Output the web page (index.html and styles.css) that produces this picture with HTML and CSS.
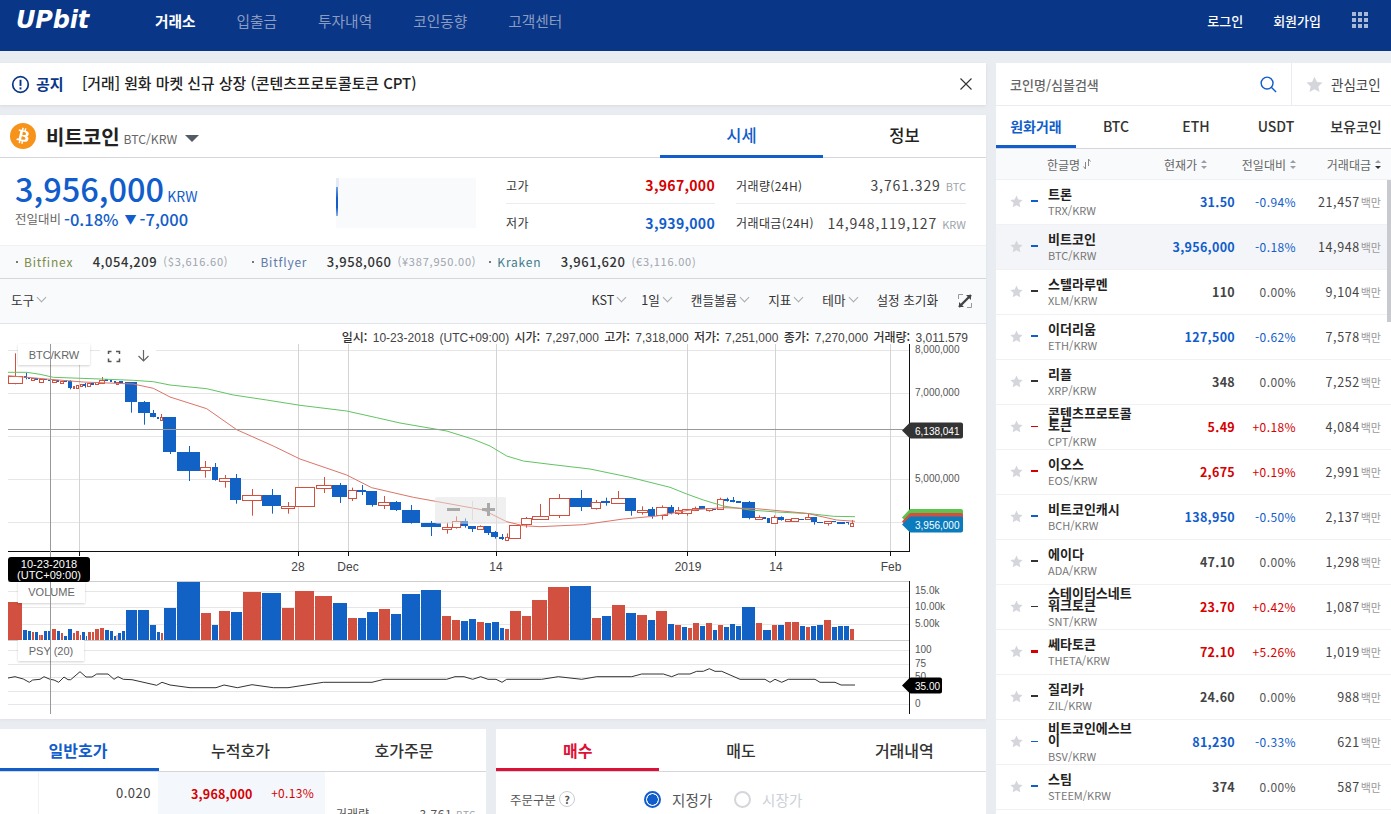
FILE: index.html
```html
<!DOCTYPE html>
<html lang="ko">
<head>
    <title>업비트 거래소</title>
    <link rel="stylesheet" href="styles.css">
</head>
<body>
    <header class="topbar">
        <div class="logo">UPbit</div>
        <nav class="nav">
            <a class="nav-item active">거래소</a>
            <a class="nav-item">입출금</a>
            <a class="nav-item">투자내역</a>
            <a class="nav-item">코인동향</a>
            <a class="nav-item">고객센터</a>
        </nav>
        <div class="user-menu">
            <a>로그인</a>
            <a>회원가입</a>
            <div class="apps">
                <i></i><i></i><i></i><i></i><i></i><i></i><i></i><i></i><i></i>
            </div>
        </div>
    </header>

    <div class="page">
        <main class="left-col">
            <section class="notice">
                <svg class="notice-icon" viewBox="0 0 20 20"><circle cx="10" cy="10" r="8.2" fill="none" stroke="#093687" stroke-width="1.8"/><rect x="9" y="5" width="2" height="6.5" fill="#093687"/><rect x="9" y="13" width="2" height="2.2" fill="#093687"/></svg>
                <span class="notice-label">공지</span>
                <span class="notice-text">[거래] 원화 마켓 신규 상장 (콘텐츠프로토콜토큰 CPT)</span>
                <svg class="notice-close" viewBox="0 0 12 12"><path d="M.5.5l11 11M11.5.5l-11 11" fill="none" stroke="#333" stroke-width="1.1"/></svg>
            </section>

            <section class="market-panel">
                <div class="market-head">
                    <div class="coin-title">
                        <svg class="btc-logo" viewBox="0 0 24 24"><circle cx="12" cy="12" r="12" fill="#f7931a"/><path fill="#fff" d="M17.288 10.291c.24-1.59-.974-2.45-2.64-3.03l.54-2.153-1.315-.33-.525 2.107c-.345-.087-.705-.167-1.064-.25l.526-2.127-1.32-.33-.54 2.165c-.285-.067-.565-.132-.84-.2l-1.815-.45-.35 1.407s.975.225.955.236c.535.136.63.486.615.766l-1.477 5.92c-.075.166-.24.406-.614.314.015.02-.96-.24-.96-.24l-.66 1.51 1.71.426.93.242-.54 2.19 1.32.327.54-2.17c.36.1.705.19 1.05.273l-.51 2.154 1.32.33.545-2.19c2.24.427 3.93.257 4.64-1.774.57-1.637-.03-2.58-1.217-3.196.854-.193 1.5-.76 1.68-1.93h.01zm-3.01 4.22c-.404 1.64-3.157.75-4.05.53l.72-2.9c.896.23 3.757.67 3.33 2.37zm.41-4.24c-.37 1.49-2.662.735-3.405.55l.654-2.64c.744.18 3.137.524 2.75 2.084v.006z"/></svg>
                        <span class="coin-title-name">비트코인</span>
                        <span class="coin-title-pair">BTC/KRW</span>
                        <span class="caret"></span>
                    </div>
                    <div class="market-tabs">
                        <a class="market-tab active">시세</a>
                        <a class="market-tab">정보</a>
                    </div>
                </div>

                <div class="summary">
                    <div class="price-box">
                        <div class="price-main"><strong>3,956,000</strong><span>KRW</span></div>
                        <div class="price-diff"><span class="diff-label">전일대비</span><b>-0.18%</b><i class="arrow">▼</i><b>-7,000</b></div>
                    </div>
                    <div class="spark"><i></i></div>
                    <div class="stats">
                        <div class="stat"><span>고가</span><b class="up">3,967,000</b></div>
                        <div class="stat"><span>거래량(24H)</span><em>3,761.329<small>BTC</small></em></div>
                        <div class="stat"><span>저가</span><b class="down">3,939,000</b></div>
                        <div class="stat"><span>거래대금(24H)</span><em>14,948,119,127<small>KRW</small></em></div>
                    </div>
                </div>

                <div class="exchanges">
                    <span class="ex-name bitfinex">Bitfinex</span><b>4,054,209</b><span class="ex-fiat">($3,616.60)</span>
                    <span class="ex-name bitflyer">Bitflyer</span><b>3,958,060</b><span class="ex-fiat">(¥387,950.00)</span>
                    <span class="ex-name kraken">Kraken</span><b>3,961,620</b><span class="ex-fiat">(€3,116.00)</span>
                </div>

                <div class="toolbar">
                    <a class="tool first">도구<i class="chev"></i></a>
                    <a class="tool kst">KST<i class="chev"></i></a>
                    <a class="tool">1일<i class="chev"></i></a>
                    <a class="tool">캔들볼륨<i class="chev"></i></a>
                    <a class="tool">지표<i class="chev"></i></a>
                    <a class="tool">테마<i class="chev"></i></a>
                    <a class="tool">설정 초기화</a>
                    <svg class="expand" viewBox="0 0 14 14"><path d="M.5 5V.5H5M9 13.5h4.500V9" fill="none" stroke="#999"/><path d="M1 13l12-12" stroke="#444" stroke-width="2.400"/><path d="M8 1h5v5zM1 8v5h5z" fill="#444"/></svg>
                </div>

                <div class="chart-area">
                    <div class="ohlc">
                        <b>일시:</b> 10-23-2018 (UTC+09:00) <b>시가:</b> 7,297,000 <b>고가:</b> 7,318,000 <b>저가:</b> 7,251,000 <b>종가:</b> 7,270,000 <b>거래량:</b> 3,011.579
                    </div>
                    <svg id="chart" class="chart" width="986" height="395" viewBox="0 0 986 395"></svg>
                </div>
            </section>

            <div class="bottom-row">
                <section class="orderbook">
                    <div class="tabs book-tabs">
                        <a class="tab active-blue">일반호가</a>
                        <a class="tab">누적호가</a>
                        <a class="tab">호가주문</a>
                    </div>
                    <div class="book-row">
                        <div class="book-left"><span>0.020</span></div>
                        <div class="book-mid"><b>3,968,000</b><span>+0.13%</span></div>
                        <div class="book-right"><span>거래량</span><em>3,761<small>BTC</small></em></div>
                    </div>
                </section>
                <section class="order-form">
                    <div class="tabs">
                        <a class="tab active-red">매수</a>
                        <a class="tab">매도</a>
                        <a class="tab">거래내역</a>
                    </div>
                    <div class="order-type">
                        <div class="order-label">주문구분<i class="help">?</i></div>
                        <label class="radio on"><i></i>지정가</label>
                        <label class="radio off"><i></i>시장가</label>
                    </div>
                </section>
            </div>
        </main>

        <aside class="coin-panel">
            <div class="search-row">
                <div class="search">
                    <span>코인명/심볼검색</span>
                    <svg viewBox="0 0 18 18"><circle cx="7.500" cy="7.500" r="6.300" fill="none" stroke="#115dcb" stroke-width="1.500"/><path d="M12 12l5 5" stroke="#115dcb" stroke-width="1.500"/></svg>
                </div>
                <div class="fav">
                    <svg class="star big" viewBox="0 0 24 24"><path d="M12 1l3.400 7.400 8 .9-6 5.400 1.700 8L12 18.700 4.900 22.700l1.700-8-6-5.400 8-.9z"/></svg>
                    <span>관심코인</span>
                </div>
            </div>
            <div class="coin-tabs">
                <a class="coin-tab active">원화거래</a>
                <a class="coin-tab">BTC</a>
                <a class="coin-tab">ETH</a>
                <a class="coin-tab">USDT</a>
                <a class="coin-tab">보유코인</a>
            </div>
            <div class="coin-head">
                <span class="h-name">한글명<svg class="swap" viewBox="0 0 8 10"><path d="M5.500 0v7M5.500 0l2 2.500M2.500 10V3M2.500 10l-2-2.500" fill="none" stroke="#888"/></svg></span>
                <span class="h-price">현재가<i class="sort"></i></span>
                <span class="h-change">전일대비<i class="sort"></i></span>
                <span class="h-vol">거래대금<i class="sort active"></i></span>
            </div>
            <div class="coin-list">
                <div class="coin-row"><svg class="star" viewBox="0 0 24 24"><path d="M12 1l3.400 7.400 8 .9-6 5.400 1.700 8L12 18.700 4.900 22.700l1.700-8-6-5.400 8-.9z"/></svg><i class="tick down"></i><div class="coin-name"><b>트론</b><span>TRX/KRW</span></div><b class="c-price down">31.50</b><span class="c-change down">-0.94%</span><span class="c-vol">21,457<small>백만</small></span></div>
                <div class="coin-row selected"><svg class="star" viewBox="0 0 24 24"><path d="M12 1l3.400 7.400 8 .9-6 5.400 1.700 8L12 18.700 4.900 22.700l1.700-8-6-5.400 8-.9z"/></svg><i class="tick down"></i><div class="coin-name"><b>비트코인</b><span>BTC/KRW</span></div><b class="c-price down">3,956,000</b><span class="c-change down">-0.18%</span><span class="c-vol">14,948<small>백만</small></span></div>
                <div class="coin-row"><svg class="star" viewBox="0 0 24 24"><path d="M12 1l3.400 7.400 8 .9-6 5.400 1.700 8L12 18.700 4.900 22.700l1.700-8-6-5.400 8-.9z"/></svg><i class="tick"></i><div class="coin-name"><b>스텔라루멘</b><span>XLM/KRW</span></div><b class="c-price">110</b><span class="c-change">0.00%</span><span class="c-vol">9,104<small>백만</small></span></div>
                <div class="coin-row"><svg class="star" viewBox="0 0 24 24"><path d="M12 1l3.400 7.400 8 .9-6 5.400 1.700 8L12 18.700 4.900 22.700l1.700-8-6-5.400 8-.9z"/></svg><i class="tick down"></i><div class="coin-name"><b>이더리움</b><span>ETH/KRW</span></div><b class="c-price down">127,500</b><span class="c-change down">-0.62%</span><span class="c-vol">7,578<small>백만</small></span></div>
                <div class="coin-row"><svg class="star" viewBox="0 0 24 24"><path d="M12 1l3.400 7.400 8 .9-6 5.400 1.700 8L12 18.700 4.900 22.700l1.700-8-6-5.400 8-.9z"/></svg><i class="tick"></i><div class="coin-name"><b>리플</b><span>XRP/KRW</span></div><b class="c-price">348</b><span class="c-change">0.00%</span><span class="c-vol">7,252<small>백만</small></span></div>
                <div class="coin-row"><svg class="star" viewBox="0 0 24 24"><path d="M12 1l3.400 7.400 8 .9-6 5.400 1.700 8L12 18.700 4.900 22.700l1.700-8-6-5.400 8-.9z"/></svg><i class="tick up"></i><div class="coin-name"><b>콘텐츠프로토콜토큰</b><span>CPT/KRW</span></div><b class="c-price up">5.49</b><span class="c-change up">+0.18%</span><span class="c-vol">4,084<small>백만</small></span></div>
                <div class="coin-row"><svg class="star" viewBox="0 0 24 24"><path d="M12 1l3.400 7.400 8 .9-6 5.400 1.700 8L12 18.700 4.900 22.700l1.700-8-6-5.400 8-.9z"/></svg><i class="tick up"></i><div class="coin-name"><b>이오스</b><span>EOS/KRW</span></div><b class="c-price up">2,675</b><span class="c-change up">+0.19%</span><span class="c-vol">2,991<small>백만</small></span></div>
                <div class="coin-row"><svg class="star" viewBox="0 0 24 24"><path d="M12 1l3.400 7.400 8 .9-6 5.400 1.700 8L12 18.700 4.900 22.700l1.700-8-6-5.400 8-.9z"/></svg><i class="tick down"></i><div class="coin-name"><b>비트코인캐시</b><span>BCH/KRW</span></div><b class="c-price down">138,950</b><span class="c-change down">-0.50%</span><span class="c-vol">2,137<small>백만</small></span></div>
                <div class="coin-row"><svg class="star" viewBox="0 0 24 24"><path d="M12 1l3.400 7.400 8 .9-6 5.400 1.700 8L12 18.700 4.900 22.700l1.700-8-6-5.400 8-.9z"/></svg><i class="tick"></i><div class="coin-name"><b>에이다</b><span>ADA/KRW</span></div><b class="c-price">47.10</b><span class="c-change">0.00%</span><span class="c-vol">1,298<small>백만</small></span></div>
                <div class="coin-row"><svg class="star" viewBox="0 0 24 24"><path d="M12 1l3.400 7.400 8 .9-6 5.400 1.700 8L12 18.700 4.900 22.700l1.700-8-6-5.400 8-.9z"/></svg><i class="tick"></i><div class="coin-name"><b>스테이터스네트워크토큰</b><span>SNT/KRW</span></div><b class="c-price up">23.70</b><span class="c-change up">+0.42%</span><span class="c-vol">1,087<small>백만</small></span></div>
                <div class="coin-row"><svg class="star" viewBox="0 0 24 24"><path d="M12 1l3.400 7.400 8 .9-6 5.400 1.700 8L12 18.700 4.900 22.700l1.700-8-6-5.400 8-.9z"/></svg><i class="tick up thick"></i><div class="coin-name"><b>쎄타토큰</b><span>THETA/KRW</span></div><b class="c-price up">72.10</b><span class="c-change up">+5.26%</span><span class="c-vol">1,019<small>백만</small></span></div>
                <div class="coin-row"><svg class="star" viewBox="0 0 24 24"><path d="M12 1l3.400 7.400 8 .9-6 5.400 1.700 8L12 18.700 4.900 22.700l1.700-8-6-5.400 8-.9z"/></svg><i class="tick"></i><div class="coin-name"><b>질리카</b><span>ZIL/KRW</span></div><b class="c-price">24.60</b><span class="c-change">0.00%</span><span class="c-vol">988<small>백만</small></span></div>
                <div class="coin-row"><svg class="star" viewBox="0 0 24 24"><path d="M12 1l3.400 7.400 8 .9-6 5.400 1.700 8L12 18.700 4.900 22.700l1.700-8-6-5.400 8-.9z"/></svg><i class="tick down"></i><div class="coin-name"><b>비트코인에스브이</b><span>BSV/KRW</span></div><b class="c-price down">81,230</b><span class="c-change down">-0.33%</span><span class="c-vol">621<small>백만</small></span></div>
                <div class="coin-row"><svg class="star" viewBox="0 0 24 24"><path d="M12 1l3.400 7.400 8 .9-6 5.400 1.700 8L12 18.700 4.900 22.700l1.700-8-6-5.400 8-.9z"/></svg><i class="tick down"></i><div class="coin-name"><b>스팀</b><span>STEEM/KRW</span></div><b class="c-price">374</b><span class="c-change">0.00%</span><span class="c-vol">587<small>백만</small></span></div>
            </div>
            <div class="scroll-thumb"></div>
        </aside>
    </div>

    <script src="chart.js"></script>
</body>
</html>
```

FILE: styles.css
```css
* {
    box-sizing: border-box;
}

html, body {
    height: 814px;
    overflow: hidden;
}

body {
    margin: 0;
    background: #e9ecf1;
    color: #333;
    font-family: "Noto Sans CJK KR", "Noto Sans", sans-serif;
    font-size: 12px;
}

a {
    text-decoration: none;
    color: inherit;
}

.up {
    color: #d60000;
}

.down {
    color: #115dcb;
}

/* top bar */
.topbar {
    display: flex;
    align-items: center;
    height: 51px;
    padding: 0 23px 11px 16px;
    background: #093687;
    color: #fff;
}

.logo {
    width: 139px;
    font-family: "DejaVu Sans", sans-serif;
    font-size: 24px;
    font-weight: bold;
    font-style: italic;
    letter-spacing: -0.2px;
}

.nav {
    display: flex;
    gap: 41px;
}

.nav-item {
    font-size: 14.700px;
    color: #8a9cc0;
}

.nav-item.active {
    color: #fff;
    font-weight: bold;
}

.user-menu {
    display: flex;
    align-items: center;
    gap: 30px;
    margin-left: auto;
    font-size: 13px;
    font-weight: 500;
}

.apps {
    display: grid;
    grid-template-columns: repeat(3, 4px);
    grid-auto-rows: 4px;
    gap: 2px;
    margin-left: 1px;
}

.apps i {
    background: #a9b8d5;
}

/* layout */
.page {
    display: flex;
    gap: 10px;
    padding-top: 12px;
}

.left-col {
    display: flex;
    flex-direction: column;
    gap: 10px;
    width: 986px;
}

/* notice */
.notice {
    display: flex;
    align-items: center;
    height: 42px;
    padding: 0 14px 0 11px;
    background: #fff;
    box-shadow: 0 1px 3px rgba(0, 0, 0, 0.08);
}

.notice-icon {
    width: 19px;
    height: 19px;
}

.notice-label {
    width: 46px;
    margin: 0 0 1px 6px;
    color: #093687;
    font-size: 15px;
    font-weight: bold;
}

.notice-text {
    margin-bottom: 3px;
    font-size: 14.900px;
    font-weight: 500;
    color: #222;
}

.notice-close {
    width: 12px;
    height: 12px;
    margin-left: auto;
}

/* market panel */
.market-panel {
    height: 604px;
    background: #fff;
    box-shadow: 0 1px 3px rgba(0, 0, 0, 0.05);
}

.market-head {
    display: flex;
    justify-content: space-between;
    height: 43px;
    border-bottom: 1px solid #d5d6dc;
}

.coin-title {
    display: flex;
    align-items: center;
    padding-left: 10px;
}

.btc-logo {
    width: 26px;
    height: 26px;
}

.coin-title-name {
    margin-left: 10px;
    font-size: 20px;
    font-weight: bold;
    color: #222;
}

.coin-title-pair {
    margin: 5px 0 0 4px;
    font-size: 12.200px;
    color: #666;
}

.caret {
    width: 0;
    height: 0;
    margin: 5px 0 0 8px;
    border-left: 7px solid transparent;
    border-right: 7px solid transparent;
    border-top: 7px solid #555b66;
}

.market-tabs {
    display: flex;
}

.market-tab {
    width: 163px;
    height: 43px;
    padding-top: 8px;
    text-align: center;
    font-size: 16.500px;
    font-weight: 500;
    color: #222;
}

.market-tab.active {
    color: #115dcb;
    border-bottom: 3px solid #115dcb;
}

.summary {
    display: flex;
    height: 87px;
}

.price-box {
    width: 336px;
    padding: 15px 0 0 15px;
}

.price-main {
    display: flex;
    align-items: baseline;
    height: 30px;
    line-height: 30px;
    color: #115dcb;
}

.price-main strong {
    font-size: 32.500px;
    font-weight: 500;
}

.price-main span {
    margin-left: 3px;
    font-size: 14px;
}

.price-diff {
    display: flex;
    align-items: center;
    height: 24px;
    margin-top: 4px;
    color: #115dcb;
    font-size: 16.500px;
    line-height: 24px;
}

.price-diff b {
    font-weight: 500;
}

.diff-label {
    margin-right: 3px;
    font-size: 12.500px;
    color: #666;
}

.arrow {
    margin: 0 3px 0 6px;
    font-size: 12px;
    font-style: normal;
}

.spark {
    width: 140px;
    height: 50px;
    margin-top: 20px;
    background: linear-gradient(#e4ebf6, #e4ebf6) no-repeat 0 0 / 3px 9px, #f9fafc;
}

.spark i {
    display: block;
    width: 2px;
    height: 29px;
    margin: 9px 0 0 0;
    background: linear-gradient(#6f9fe0, #115dcb 40%, #115dcb 70%, #8fb4e8);
}

.stats {
    display: grid;
    grid-template-columns: 209px 230px;
    grid-auto-rows: 37px;
    column-gap: 21px;
    margin: 9px 0 0 30px;
}

.stat {
    display: flex;
    justify-content: space-between;
    align-items: center;
    height: 37px;
    font-size: 12px;
}

.stat span {
    letter-spacing: 0.4px;
}

.stat:nth-child(-n+2) {
    border-bottom: 1px solid #e9ecf1;
}

.stat b {
    font-size: 14px;
    font-weight: bold;
    letter-spacing: 0.3px;
}

.stat em {
    font-style: normal;
    font-size: 14px;
    color: #444;
    letter-spacing: 0.9px;
}

.stat small {
    margin-left: 5px;
    font-size: 11px;
    color: #a0a4ac;
    letter-spacing: 0;
}

.exchanges {
    display: flex;
    align-items: center;
    height: 34px;
    padding: 0 0 2px 24px;
    background: #f9fafc;
    border-top: 1px solid #f1f1f4;
    border-bottom: 1px solid #d5d6dc;
    font-size: 12px;
    white-space: nowrap;
}

.exchanges b {
    font-size: 13px;
    font-weight: 500;
    letter-spacing: 0.55px;
    margin-left: 19.500px;
}

.ex-name {
    position: relative;
    letter-spacing: 0.8px;
}

.ex-name::before {
    content: "";
    position: absolute;
    left: -8px;
    top: 8px;
    width: 2px;
    height: 2px;
    background: #777;
}

.bitfinex {
    color: #7a8b4a;
}

.bitflyer {
    margin-left: 32px;
    color: #5f79a8;
}

.kraken {
    margin-left: 21px;
    color: #3f7b8a;
}

.ex-fiat {
    margin-left: 6px;
    color: #a0a4ac;
    font-size: 11px;
    letter-spacing: 0.8px;
}

.toolbar {
    display: flex;
    align-items: center;
    justify-content: flex-end;
    gap: 18px;
    height: 45px;
    padding: 0 14px 4px 11px;
    background: #f9fafc;
    border-bottom: 1px solid #e3e4e8;
    font-size: 12.600px;
    color: #333;
}

.tool {
    display: flex;
    align-items: center;
}

.tool.first {
    margin-right: auto;
}

.tool.kst {
    margin-right: -4px;
}

.chev {
    width: 7px;
    height: 7px;
    margin: -4px 2px 0 4px;
    border-right: 1px solid #aaa;
    border-bottom: 1px solid #aaa;
    transform: rotate(45deg);
}

.expand {
    width: 14px;
    height: 14px;
    margin: 3px 0 0 2px;
}

.chart-area {
    position: relative;
    height: 395px;
}

.ohlc {
    position: absolute;
    top: 4px;
    right: 18px;
    z-index: 1;
    font-family: "Liberation Sans", "Noto Sans CJK KR", sans-serif;
    font-size: 12px;
    color: #444;
    white-space: nowrap;
    word-spacing: 2px;
}

.ohlc b {
    font-family: "Noto Sans CJK KR", sans-serif;
    font-weight: 500;
    color: #333;
}

.chart {
    display: block;
}

.chart text {
    font-family: "Liberation Sans", sans-serif;
    font-size: 10px;
    fill: #555;
}

.chart text.x-label {
    font-size: 12px;
    fill: #444;
    text-anchor: middle;
}

.chart text.tag {
    fill: #fff;
}

.chart text.time-tag {
    fill: #fff;
    font-size: 11px;
    text-anchor: middle;
}

.chart text.pane-title {
    font-size: 11px;
    fill: #666;
    text-anchor: middle;
}

.pane-box {
    fill: #fff;
    filter: drop-shadow(0 1px 1px rgba(0, 0, 0, 0.18));
}

/* bottom panels */
.bottom-row {
    display: flex;
    gap: 10px;
}

.orderbook, .order-form {
    height: 120px;
    background: #fff;
}

.orderbook {
    width: 486px;
}

.order-form {
    width: 490px;
}

.tabs {
    display: grid;
    grid-template-columns: 1fr 1fr 1fr;
    height: 43px;
    border-bottom: 1px solid #d5d6dc;
}

.book-tabs {
    grid-template-columns: 159px 166px 161px;
}

.book-tabs .tab {
    padding-right: 3px;
}

.tab {
    padding-top: 9px;
    text-align: center;
    font-size: 16px;
    font-weight: 500;
    color: #333;
}

.active-blue {
    color: #115dcb;
    font-weight: bold;
    border-bottom: 3px solid #115dcb;
}

.active-red {
    color: #dd1138;
    font-weight: bold;
    border-bottom: 3px solid #dd1138;
}

.book-row {
    display: flex;
    height: 77px;
}

.book-left {
    width: 158px;
    padding: 11px 7px 0 0;
    text-align: right;
    background: linear-gradient(to right, #fff 38px, #f1f1f4 38px, #f1f1f4 39px, #fff 39px);
    font-size: 13px;
    letter-spacing: 0.5px;
    color: #444;
}

.book-mid {
    display: flex;
    justify-content: space-between;
    width: 167px;
    padding: 12px 11px 0 33px;
    background: #f4f8fd;
    color: #d60000;
}

.book-mid b {
    font-size: 12.500px;
    letter-spacing: 0.2px;
}

.book-mid span {
    font-size: 12px;
    letter-spacing: 0.3px;
}

.book-right {
    display: flex;
    justify-content: space-between;
    flex: 1;
    padding: 33px 10px 0 11px;
    color: #555;
}

.book-right em {
    font-style: normal;
    letter-spacing: 0.5px;
}

.book-right small {
    margin-left: 4px;
    font-size: 10px;
    color: #a0a4ac;
}

.order-type {
    display: flex;
    align-items: center;
    height: 58px;
    padding: 0 0 4px 14px;
}

.order-label {
    display: flex;
    align-items: center;
    width: 134px;
    font-size: 12.500px;
    color: #555;
}

.help {
    width: 16px;
    height: 16px;
    margin-left: 3px;
    border: 1px solid #c9ccd2;
    border-radius: 50%;
    text-align: center;
    line-height: 14px;
    font-size: 11px;
    font-style: normal;
    font-weight: bold;
    color: #555;
}

.radio {
    display: flex;
    align-items: center;
    width: 90px;
    font-size: 14.500px;
    letter-spacing: 0.2px;
    color: #555;
}

.radio i {
    width: 17px;
    height: 17px;
    margin-right: 11px;
    border-radius: 50%;
}

.radio.on i {
    border: 2.500px solid #115dcb;
    background: radial-gradient(circle, #115dcb 5px, #fff 5.500px);
}

.radio.off {
    color: #ccd0d8;
}

.radio.off i {
    border: 2.500px solid #d5d6dc;
}

/* coin panel */
.coin-panel {
    position: relative;
    width: 395px;
    height: 751px;
    background: #fff;
}

.search-row {
    display: flex;
    height: 43px;
    border-bottom: 1px solid #e9ecf1;
}

.search {
    display: flex;
    align-items: center;
    justify-content: space-between;
    width: 296px;
    padding: 0 14px;
    border-right: 1px solid #e9ecf1;
    font-size: 13px;
    font-weight: 500;
    color: #666;
}

.search svg {
    width: 17px;
    height: 17px;
}

.fav {
    display: flex;
    align-items: center;
    gap: 8px;
    padding-left: 14px;
    font-size: 13.500px;
    color: #444;
}

.star {
    width: 13px;
    height: 13px;
    fill: #d5d6dc;
    flex: none;
}

.star.big {
    width: 17px;
    height: 17px;
}

.coin-tabs {
    display: grid;
    grid-template-columns: repeat(5, 80px);
    height: 43px;
    border-bottom: 1px solid #d5d6dc;
}

.coin-tab {
    padding-top: 10px;
    text-align: center;
    font-size: 14px;
    font-weight: 500;
    color: #333;
}

.coin-tab.active {
    color: #115dcb;
    font-weight: bold;
    border-bottom: 3px solid #115dcb;
}

.coin-head {
    display: grid;
    grid-template-columns: 110px 50px 89px 85px;
    align-items: center;
    height: 31px;
    padding-left: 51px;
    background: #f9fafc;
    border-bottom: 1px solid #f1f1f4;
    font-size: 12px;
    color: #666;
}

.h-name {
    display: flex;
    align-items: center;
}

.h-price, .h-change, .h-vol {
    display: flex;
    align-items: center;
    justify-content: flex-end;
    white-space: nowrap;
}

.swap {
    width: 8px;
    height: 10px;
    margin-left: 3px;
}

.sort {
    position: relative;
    width: 6px;
    height: 9px;
    margin-left: 4px;
}

.sort::before, .sort::after {
    content: "";
    position: absolute;
    left: 0;
    border-left: 3px solid transparent;
    border-right: 3px solid transparent;
}

.sort::before {
    top: 0;
    border-bottom: 3px solid #9a9ea6;
}

.sort::after {
    bottom: 0;
    border-top: 3px solid #9a9ea6;
}

.sort.active::after {
    border-top-color: #333;
}

.coin-row {
    display: grid;
    grid-template-columns: 13px 11px 1fr 100px 61px 85px;
    align-items: center;
    height: 45px;
    padding: 0 10px 2px 14px;
    border-bottom: 1px solid #f1f1f4;
}

.coin-row.selected {
    background: #f4f5f8;
}

.tick {
    width: 7px;
    height: 1.500px;
    margin-left: 8px;
    background: #333;
}

.tick.up {
    background: #d60000;
}

.tick.down {
    background: #115dcb;
}

.tick.thick {
    height: 3px;
}

.coin-name {
    grid-column: 3;
    width: 86px;
    margin: 2px 0 0 14px;
}

.coin-name b {
    display: block;
    font-size: 13px;
    line-height: 12px;
    color: #222;
    word-break: break-all;
}

.coin-name span {
    display: block;
    margin-top: 3px;
    font-size: 11px;
    line-height: 14px;
    color: #777;
    white-space: nowrap;
}

.c-price {
    text-align: right;
    font-size: 12.500px;
    letter-spacing: 0.3px;
    color: #444;
}

.c-price.up {
    color: #d60000;
}

.c-price.down {
    color: #115dcb;
}

.c-change {
    text-align: right;
    font-size: 12px;
    letter-spacing: 0.4px;
    color: #555;
}

.c-change.up {
    color: #d60000;
}

.c-change.down {
    color: #115dcb;
}

.c-vol {
    text-align: right;
    font-size: 12.500px;
    letter-spacing: 0.6px;
    color: #444;
    white-space: nowrap;
}

.c-vol small {
    margin-left: 1px;
    font-size: 11px;
    color: #999;
    letter-spacing: 0;
}

.scroll-thumb {
    position: absolute;
    top: 117px;
    right: 0;
    width: 4px;
    height: 142px;
    background: #c8cad0;
}
```

FILE: chart.js
```js
// coordinates below were read at 3x scale, page origin x=0, y=320 (main) / y=550 (lower panes)
var NS = 'http://www.w3.org/2000/svg';
var svg = document.getElementById('chart');
var TOP = 324;
var RED = '#d1503f', BLUE = '#1261c4';

function add(tag, attrs, text) {
    var el = document.createElementNS(NS, tag);
    for (var k in attrs) el.setAttribute(k, attrs[k]);
    if (text) el.textContent = text;
    svg.appendChild(el);
    return el;
}

function line(x1, y1, x2, y2, color, w) {
    add('line', { x1: x1, y1: y1 - TOP, x2: x2, y2: y2 - TOP, stroke: color, 'stroke-width': w || 1 });
}

function my(y) { return y / 3 + 320; }
function ly(y) { return y / 3 + 550; }

// grid
[350.5, 393.5, 436.5, 479.5, 522.5].forEach(function (y) { line(8, y, 909, y, '#e6e6e6'); });
[591.5, 607.5, 624.5, 650.5, 664.5, 677.5, 691.5, 704.5].forEach(function (y) { line(8, y, 909, y, '#e6e6e6'); });
[79.5, 298.5, 348.5, 496.5, 687.5, 775.5, 890.5].forEach(function (x) { line(x, 344, x, 551, '#d4d4d4'); });

// candles: up?, x1, x2, top, bottom, wick top, wick bottom
var candles = [
    [1,24,68,167,190,100,193],[0,72,84,167,175,158,178],[0,85,92,172,177],[1,93,104,174,181],[0,105,116,175,180],
    [1,117,131,176,185],[0,132,143,178,181],[0,144,155,179,184],[1,156,170,180,187],[0,171,179,181,185],
    [1,180,192,183,190],[0,193,203,181,185],[0,204,218,183,204,181,208],[1,218,226,197,205],[1,228,236,196,203],
    [1,240,248,193,199],[0,249,260,191,198,189,203],[1,262,272,190,199],[0,273,285,190,194],[1,286,298,186,192],
    [1,298,314,179,189,171,190],[0,315,328,177,183],[0,329,340,180,187],[0,341,350,183,190],[1,349,356,186,193],
    [0,358,372,184,190],[0,375,414,186,245,186,278],[0,414,453,246,278,243,314],[0,450,471,279,291,270,292],
    [0,471,481,290,298],[1,481,490,292,299,282,299],[0,490,531,291,395,291,402],[0,531,603,397,452,378,483],
    [1,601,634,442,451,423,473],[0,636,657,441,479,429,482],[1,658,694,475,482,465,503],[0,691,726,474,540,462,551],
    [1,727,785,526,541,507,587],[0,786,846,525,557,507,581],[1,844,885,557,563,546,581],[1,886,946,502,557,502,557],
    [1,947,997,496,503,471,519],[0,997,1044,495,531,489,549],[1,1043,1070,511,533,503,543],[0,1071,1101,511,515,495,525],
    [0,1098,1134,513,555,513,560],[1,1135,1170,547,554,528,567],[0,1171,1206,546,570,543,573],[0,1206,1263,570,608,555,611],
    [0,1263,1325,608,621,603,648],[1,1325,1355,622,628,608,641],[1,1357,1382,604,620,589,626],[0,1382,1407,604,618,595,623],
    [0,1405,1431,618,627,618,636],[1,1431,1453,619,628,616,630],[0,1453,1476,618,639,618,645],[0,1473,1497,637,651,633,656]
];
// right half of the chart, read from the second crop (x + 1470)
[
    [0,27,45,650,656,642,660],[1,45,58,650,659,640,659],[1,58,94,616,653],[1,94,126,595,613,591,623],[1,126,176,589,596,552,596],
    [1,176,239,535,586,522,594],[0,239,308,535,560,510,573],[1,304,332,547,563,540,569],[0,333,363,543,548,533,557],
    [1,364,407,535,548,513,548],[0,405,441,534,572,534,587],[1,442,473,569,575,559,584],[0,473,498,568,587,561,596],
    [1,498,533,562,586,556,599],[0,533,556,561,579,555,583],[1,556,575,570,579,561,585],[1,575,607,568,578,568,587],
    [1,607,627,563,570,560,573],[0,627,647,559,567],[1,647,668,565,571,565,575],[0,668,682,566,569],[1,682,701,538,566,533,568],
    [0,701,719,537,543,533,545],[0,719,737,540,545,531,547],[0,737,756,542,548],[0,756,798,547,594,543,598],
    [1,796,819,592,598,586,598],[0,819,831,590,596],[0,831,844,595,610],[1,844,863,592,608,586,610],[0,863,884,591,599,589,602],
    [1,884,904,597,604],[1,904,926,595,602],[0,926,945,596,600],[1,945,963,592,598,582,598],[0,963,984,591,606,591,614],
    [0,981,1002,605,610],[1,1002,1025,604,610,604,617],[0,1025,1041,603,607],[0,1041,1068,606,611],[0,1068,1081,606,610,606,614],
    [1,1081,1093,610,617,600,617]
].forEach(function (c) {
    c[1] += 1470; c[2] += 1470;
    candles.push(c);
});

candles.forEach(function (c) {
    var color = c[0] ? RED : BLUE;
    var x1 = Math.round(c[1] / 3), x2 = Math.round(c[2] / 3);
    var top = Math.round(my(c[3])), bot = Math.round(my(c[4]));
    if (c[5] !== undefined) {
        var cx = Math.floor((x1 + x2) / 2) + 0.5;
        line(cx, my(c[5]), cx, my(c[6]), color);
    }
    if (c[0]) {
        add('rect', { x: x1 + 0.5, y: top - TOP + 0.5, width: Math.max(x2 - x1 - 1, 1), height: Math.max(bot - top, 1), fill: '#fff', stroke: color });
    } else {
        add('rect', { x: x1, y: top - TOP, width: Math.max(x2 - x1 - 1, 1), height: Math.max(bot - top, 1), fill: color });
    }
});

// moving averages
function poly(points, color, yfn, w) {
    var d = points.map(function (p) { return (p[0] / 3).toFixed(1) + ',' + (yfn(p[1]) - TOP).toFixed(1); }).join(' ');
    add('polyline', { points: d, fill: 'none', stroke: color, 'stroke-width': w || 1 });
}

poly([[24,157],[80,157],[120,163],[160,172],[300,177],[400,181],[460,185],[510,195],[620,206],[700,225],[800,240],[900,256],[1040,273],[1130,293],[1200,309],[1340,333],[1420,358],[1470,378],[1520,408],[1570,423],[1650,433],[1770,447],[1890,472],[2010,502],[2060,522],[2110,540],[2170,558],[2250,570],[2330,576],[2430,581],[2500,589],[2565,590]], '#62c462', my);
poly([[24,167],[150,178],[250,186],[400,192],[460,205],[510,231],[620,266],[710,329],[820,378],[900,417],[1040,465],[1115,503],[1240,532],[1330,548],[1450,570],[1520,605],[1570,617],[1620,620],[1750,614],[1870,597],[1970,588],[2070,570],[2170,563],[2270,566],[2420,580],[2510,600],[2565,604]], '#dc7468', my);

// crosshair
line(8, 429.5, 909, 429.5, '#999');

// zoom control over the chart
add('rect', { x: 435, y: 497 - TOP, width: 71, height: 27, rx: 2, fill: 'rgba(225,225,225,0.5)' });
add('rect', { x: 447, y: 508 - TOP, width: 13, height: 3, fill: '#aaa' });
add('rect', { x: 472, y: 501 - TOP, width: 1, height: 19, fill: '#ddd' });
add('rect', { x: 482, y: 508 - TOP, width: 13, height: 3, fill: '#aaa' });
add('rect', { x: 487, y: 503 - TOP, width: 3, height: 13, fill: '#aaa' });

// axes
line(8, 551.5, 909.5, 551.5, '#111');
line(909.5, 344, 909.5, 552, '#111');
[79.5, 298.5, 348.5, 496.5, 687.5, 775.5, 890.5].forEach(function (x) { line(x, 551, x, 556, '#111'); });
[[298, '28'], [348, 'Dec'], [496, '14'], [688, '2019'], [776, '14'], [891, 'Feb']].forEach(function (l) {
    add('text', { x: l[0], y: 571 - TOP, 'class': 'x-label' }, l[1]);
});

[[349, '8,000,000'], [392, '7,000,000'], [478, '5,000,000']].forEach(function (l) {
    add('text', { x: 915, y: l[0] + 4 - TOP }, l[1]);
});

// volume pane
line(8, 581.5, 909, 581.5, '#ccc');
line(8, 640.5, 909, 640.5, '#ccc');
var bars = [
    [1,24,66,156],[0,69,81,240],[0,84,93,243],[1,96,102,246],[0,105,114,246],[1,117,122,255],[1,123,129,255],[0,132,141,243],
    [0,144,150,243],[1,156,168,237],[0,171,180,243],[1,183,189,249],[0,192,201,258],[0,204,216,237],[1,219,225,249],[1,228,237,243],
    [1,240,243,255],[0,246,255,246],[0,258,261,258],[1,264,273,246],[1,276,282,246],[1,285,297,237],[1,300,312,234],[0,315,327,240],
    [0,330,339,243],[0,342,348,258],[1,350,352,255],[0,354,363,249],[0,366,375,243],[0,378,411,180],[0,414,447,180],[0,450,468,225],
    [0,471,480,246],[1,483,489,249],[0,492,528,174],[0,531,600,96],[1,603,633,189],[0,636,654,225],[1,657,690,183],[0,693,726,186],
    [1,729,783,126],[0,786,843,129],[1,846,882,174],[1,885,942,123],[1,945,996,138],[0,999,1041,159],[1,1044,1071,204],[0,1074,1098,204],
    [0,1101,1134,186],[1,1137,1170,177],[0,1173,1203,192],[0,1206,1260,132],[0,1263,1323,120],[1,1326,1353,198],[1,1356,1380,210],
    [0,1383,1404,213],[0,1407,1428,207],[1,1431,1452,216],[0,1455,1473,219],[0,1476,1497,216]
];
[
    [0,30,42,234],[1,45,57,237],[1,60,93,183],[1,96,123,198],[1,126,171,150],[1,174,237,111],[0,240,303,108],[1,306,333,204],
    [0,336,363,198],[1,366,405,165],[0,408,438,189],[1,441,471,195],[0,474,495,210],[1,498,531,183],[0,534,552,222],[1,555,573,225],
    [0,576,591,231],[1,594,606,234],[1,609,627,219],[0,630,645,228],[1,648,666,219],[0,669,681,240],[1,684,699,225],[0,702,717,231],
    [0,720,735,222],[0,738,753,228],[0,756,795,171],[1,798,816,219],[0,819,843,240],[1,846,861,225],[0,864,882,225],[1,885,903,216],
    [1,906,927,216],[0,930,945,228],[1,948,960,231],[0,963,978,228],[0,981,999,225],[1,1002,1023,210],[0,1026,1041,231],[0,1044,1059,228],
    [0,1062,1077,228],[1,1080,1092,237]
].forEach(function (b) {
    b[1] += 1470; b[2] += 1470;
    bars.push(b);
});
bars.forEach(function (b) {
    add('rect', { x: b[1] / 3, y: ly(b[3]) - TOP, width: (b[2] - b[1]) / 3, height: 640 - ly(b[3]), fill: b[0] ? RED : BLUE });
});
line(909.5, 581, 909.5, 640, '#111');
[[590, '15.0k'], [606, '10.00k'], [623, '5.00k'], [649, '100'], [663, '75'], [676, '50'], [703, '0']].forEach(function (l) {
    add('text', { x: 915, y: l[0] + 4 - TOP }, l[1]);
});

// psy pane
poly([[24,384],[45,380],[70,387],[88,397],[98,390],[120,388],[132,380],[150,388],[162,390],[176,397],[192,381],[204,389],[212,389],[240,365],[258,381],[276,381],[290,372],[324,372],[342,388],[354,380],[370,388],[396,389],[470,406],[486,397],[510,405],[570,413],[648,413],[672,405],[712,413],[756,404],[820,413],[864,413],[970,397],[1116,397],[1152,388],[1340,388],[1365,380],[1392,380],[1418,388],[1442,380],[1464,388],[1488,388],[1506,397],[1520,388],[1625,388],[1675,380],[1745,388],[1790,380],[1895,380],[1925,372],[1990,372],[2015,380],[2035,372],[2070,372],[2090,364],[2110,364],[2128,356],[2145,364],[2165,364],[2220,388],[2295,388],[2310,397],[2325,388],[2345,397],[2365,388],[2445,388],[2460,397],[2505,397],[2523,405],[2565,405]], '#333', ly);
line(909.5, 640, 909.5, 714, '#111');

// vertical crosshair sits over everything but the labels
line(50.5, 344, 50.5, 714, '#999');

// pane titles
function paneTitle(x, y, w, h, label) {
    add('rect', { x: x, y: y - TOP, width: w, height: h, 'class': 'pane-box' });
    add('text', { x: x + w / 2, y: y + h / 2 + 4 - TOP, 'class': 'pane-title' }, label);
}
paneTitle(18, 344, 72, 21, 'BTC/KRW');
paneTitle(18, 581, 67, 22, 'VOLUME');
paneTitle(18, 640, 66, 21, 'PSY (20)');
line(50.5, 344, 50.5, 365, '#999');
line(50.5, 581, 50.5, 661, '#999');

// fullscreen and download buttons
add('rect', { x: 100, y: 20, width: 56, height: 20, fill: '#fff' });
add('path', { d: 'M108.500 30v-2.500h3M116 27.500h3.500V30M119.500 34.500v3h-3M111.500 37.500h-3v-3', fill: 'none', stroke: '#555', 'stroke-width': 1.500 });
add('path', { d: 'M143.500 26v11M138.500 32l5 5 5-5', fill: 'none', stroke: '#666', 'stroke-width': 1.200 });

// value tags
function tag(y, color, label, h, w) {
    var t = y - TOP - h / 2;
    add('path', { d: 'M902 ' + (t + h / 2) + 'l7-' + (h / 2 - 1) + 'q1-1 2-1H' + (909 + (w || 52)) + 'q2 0 2 2V' + (t + h - 2) + 'q0 2-2 2H911q-1 0-2-1z', fill: color });
    if (label) add('text', { x: 915, y: y + 4 - TOP, 'class': 'tag' }, label);
}
tag(430.5, '#333', '6,138,041', 16);
tag(517.5, '#5bc34e', '', 17);
tag(521.5, '#d1503f', '', 17);
tag(524.5, '#0a7bbd', '3,956,000', 16);
tag(685.5, '#000', '35.00', 16, 31);

// time tag
add('rect', { x: 8, y: 557 - TOP, width: 82, height: 25, rx: 3, fill: '#000' });
add('text', { x: 49, y: 568 - TOP, 'class': 'time-tag' }, '10-23-2018');
add('text', { x: 49, y: 579 - TOP, 'class': 'time-tag' }, '(UTC+09:00)');
```
